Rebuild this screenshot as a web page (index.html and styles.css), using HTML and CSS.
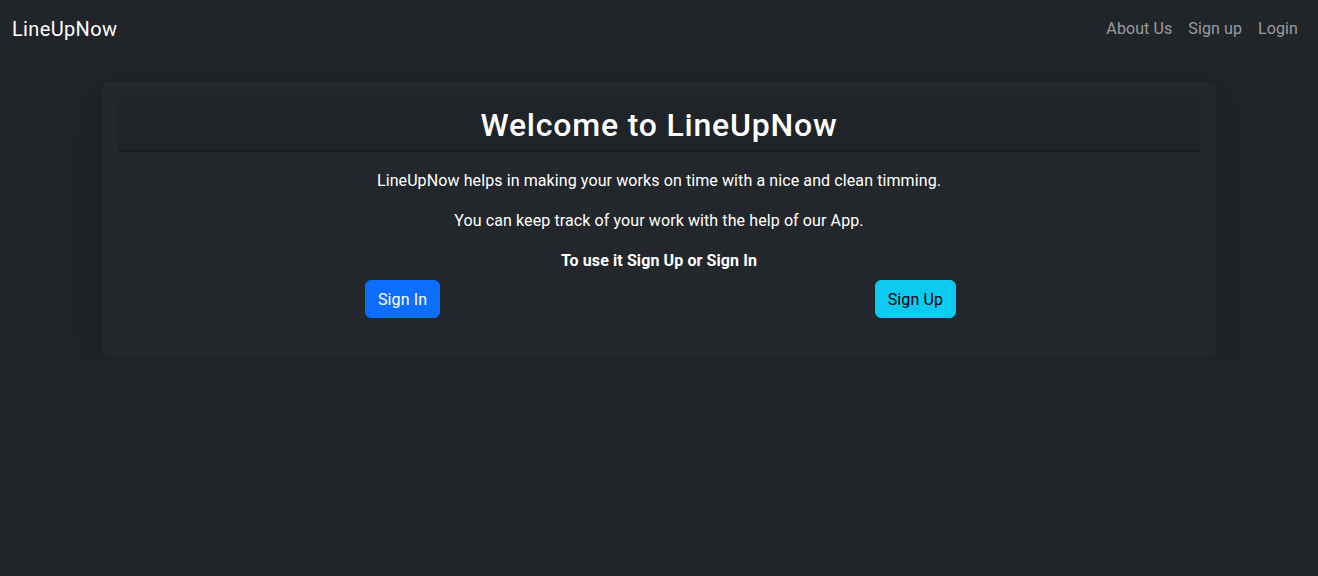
FILE: index.html
```html
<!DOCTYPE html>
<html lang="en">
<head>
<meta charset="utf-8">
<title>LineUpNow</title>
<link rel="stylesheet" href="styles.css">
</head>
<body>
<nav class="navbar">
  <a class="brand" href="#">LineUpNow</a>
  <ul class="nav-links">
    <li><a href="#">About Us</a></li>
    <li><a href="#">Sign up</a></li>
    <li><a href="#">Login</a></li>
  </ul>
</nav>
<main class="container">
  <div class="card">
    <div class="card-header">
      <h2>Welcome to LineUpNow</h2>
    </div>
    <div class="card-text">
      <p>LineUpNow helps in making your works on time with a nice and clean timming.</p>
      <p>You can keep track of your work with the help of our App.</p>
      <p class="strong">To use it Sign Up or Sign In</p>
    </div>
    <div class="actions">
      <a class="btn btn-primary" href="#">Sign In</a>
      <a class="btn btn-info" href="#">Sign Up</a>
    </div>
  </div>
</main>
</body>
</html>
```
FILE: styles.css
```css
*{box-sizing:border-box}
html,body{margin:0;padding:0}
body{
  background:#212529;
  color:#dee2e6;
  font-family:Roboto,"Liberation Sans",sans-serif;
  font-size:16px;
  line-height:1.5;
  letter-spacing:0.1px;
}
a{text-decoration:none}
.navbar{
  display:flex;
  align-items:center;
  justify-content:space-between;
  padding:8px 12px;
  height:56px;
}
.brand{
  color:#fff;
  font-size:20px;
  line-height:30px;
  padding:6px 0 4px;
  letter-spacing:0.35px;
}
.nav-links{
  list-style:none;
  margin:0;
  padding:0;
  display:flex;
}
.nav-links a{
  display:block;
  padding:9px 8px 7px;
  color:rgba(255,255,255,.55);
}
.container{
  max-width:1140px;
  margin:0 auto;
  padding:0 12px;
}
.card{
  margin-top:24px;
  background:#23272b;
  border:1px solid rgba(0,0,0,.175);
  border-radius:6px;
  padding:16px 16px 40px;
  box-shadow:0 16px 48px rgba(0,0,0,.25);
}
.card-header{
  background:rgba(0,0,0,.06);
  border-bottom:1px solid rgba(0,0,0,.2);
  padding:9px 16px 7px;
  text-align:center;
}
.card-header h2{
  margin:0;
  font-size:32px;
  line-height:38px;
  font-weight:500;
  color:#fff;
  letter-spacing:0.8px;
}
.card-text{
  margin-top:17px;
  text-align:center;
  color:#fff;
}
.card-text p{margin:0 0 16px}
.card-text p.strong{font-weight:700;margin-bottom:7px}
.actions{
  display:flex;
  justify-content:space-between;
  padding:0 244px 0 247px;
}
.btn{
  display:inline-block;
  padding:7px 12px 5px;
  line-height:24px;
  border:1px solid transparent;
  border-radius:6px;
  font-size:16px;
}
.btn-primary{background:#0d6efd;border-color:#0d6efd;color:#fff}
.btn-info{background:#0dcaf0;border-color:#0dcaf0;color:#000}
```
